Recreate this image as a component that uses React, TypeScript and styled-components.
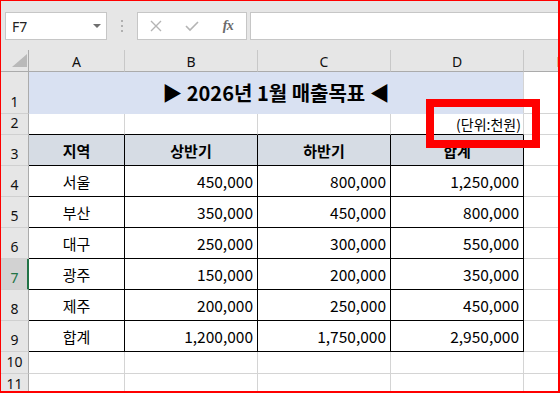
import React from 'react';
import styled, { createGlobalStyle } from 'styled-components';

const Global = createGlobalStyle`
  html, body { margin: 0; padding: 0; background: #fff; }
  body { font-family: "Noto Sans CJK KR", "Noto Sans", sans-serif; }
  * { box-sizing: border-box; }
`;

const Frame = styled.div`
  position: relative;
  width: 560px;
  height: 393px;
  border-style: solid;
  border-color: #ff0000;
  border-width: 1px 2px 2px 1px;
  overflow: hidden;
  background: #fff;
  display: flex;
  flex-direction: column;
`;

const Toolbar = styled.div`
  flex: none;
  height: 49px;
  background: #e6e6e6;
  display: flex;
  align-items: flex-start;
  padding: 11px 0 0 4px;
`;

const NameBox = styled.div`
  position: relative;
  width: 102px;
  height: 28px;
  background: #fff;
  border: 1px solid #c6c6c6;
  display: flex;
  align-items: center;
  padding-left: 6px;
  font-family: "Noto Sans", "Open Sans", sans-serif;
  font-size: 14px;
  color: #222;
`;

const DropArrow = styled.span`
  position: absolute;
  right: 5px;
  top: 11px;
  width: 0;
  height: 0;
  border-left: 4px solid transparent;
  border-right: 4px solid transparent;
  border-top: 4px solid #6f6f6f;
`;

const Dots = styled.div`
  width: 30px;
  height: 28px;
  display: flex;
  flex-direction: column;
  align-items: center;
  justify-content: center;
  gap: 3px;
`;

const Dot = styled.span`
  width: 2px;
  height: 2px;
  background: #b0b0b0;
`;

const FxButtons = styled.div`
  width: 110px;
  height: 28px;
  background: #fff;
  border: 1px solid #c6c6c6;
  display: grid;
  grid-template-columns: 36px 36px 36px;
  align-items: center;
  justify-items: center;
`;

const FxLabel = styled.span`
  font-family: "Liberation Serif", "DejaVu Serif", serif;
  font-style: italic;
  font-weight: bold;
  font-size: 14px;
  color: #6a6a6a;
  letter-spacing: -0.5px;
`;

const FormulaInput = styled.div`
  flex: 1;
  margin-left: 3px;
  height: 28px;
  background: #fff;
  border: 1px solid #c6c6c6;
  border-right: none;
`;

const Sheet = styled.div`
  display: grid;
  grid-template-columns: 28px 96px 133px 133px 133px 74px;
  grid-template-rows: 22px 42px 21px repeat(7, 31px) 22px 22px;
`;

const Corner = styled.div`
  background: #e6e6e6;
  border-right: 1px solid #ababab;
  border-bottom: 1px solid #ababab;
  position: relative;
`;

const CornerTriangle = styled.svg`
  position: absolute;
  left: 10px;
  top: 4px;
`;

const ColHeader = styled.div`
  background: #e6e6e6;
  border-right: 1px solid #c8c8c8;
  border-bottom: 1px solid #ababab;
  display: flex;
  align-items: center;
  justify-content: center;
  font-family: "Noto Sans", "Open Sans", sans-serif;
  font-size: 14px;
  color: #111;
  padding-top: 1px;
`;

const RowHeader = styled.div<{ $selected?: boolean }>`
  background: ${(p) => (p.$selected ? '#d2d2d2' : '#e6e6e6')};
  border-right: ${(p) => (p.$selected ? '2px solid #217346' : '1px solid #ababab')};
  border-bottom: 1px solid #d0d0d0;
  display: flex;
  align-items: flex-end;
  justify-content: center;
  padding-bottom: 3px;
  padding-left: ${(p) => (p.$selected ? '1px' : '0')};
  font-family: "Noto Sans", "Open Sans", sans-serif;
  font-size: 14px;
  line-height: 16px;
  color: ${(p) => (p.$selected ? '#217346' : '#111')};
`;

type Align = 'left' | 'center' | 'right';

const Cell = styled.div<{
  $align?: Align;
  $table?: boolean;
  $topEdge?: boolean;
  $fill?: string;
  $bold?: boolean;
  $size?: number;
  $span?: number;
  $padRight?: number;
}>`
  grid-column: ${(p) => (p.$span ? `span ${p.$span}` : 'auto')};
  background: ${(p) => p.$fill || '#fff'};
  border-right: 1px solid ${(p) => (p.$table ? '#000' : '#d4d4d4')};
  border-bottom: 1px solid
    ${(p) => (p.$table || p.$topEdge ? '#000' : p.$fill ? p.$fill : '#d4d4d4')};
  display: flex;
  align-items: center;
  justify-content: ${(p) =>
    p.$align === 'right' ? 'flex-end' : p.$align === 'center' ? 'center' : 'flex-start'};
  padding: 0 ${(p) => (p.$padRight ?? 4)}px 0 4px;
  font-size: ${(p) => p.$size || 15}px;
  font-weight: ${(p) => (p.$bold ? 700 : 400)};
  color: #000;
  white-space: nowrap;
`;

const Annotation = styled.div`
  position: absolute;
  left: 425px;
  top: 98px;
  width: 114px;
  height: 49px;
  border: 8px solid #ff0000;
  pointer-events: none;
`;

const data = [
  ['서울', '450,000', '800,000', '1,250,000'],
  ['부산', '350,000', '450,000', '800,000'],
  ['대구', '250,000', '300,000', '550,000'],
  ['광주', '150,000', '200,000', '350,000'],
  ['제주', '200,000', '250,000', '450,000'],
  ['합계', '1,200,000', '1,750,000', '2,950,000'],
];

const cols = ['A', 'B', 'C', 'D', 'E'];

export default function App() {
  return (
    <>
      <Global />
      <Frame>
        <Toolbar>
          <NameBox>
            F7
            <DropArrow />
          </NameBox>
          <Dots>
            <Dot />
            <Dot />
            <Dot />
          </Dots>
          <FxButtons>
            <svg width="12" height="12" viewBox="0 0 12 12">
              <path d="M1 1 L11 11 M11 1 L1 11" stroke="#b4b4b4" strokeWidth="1.4" fill="none" />
            </svg>
            <svg width="14" height="12" viewBox="0 0 14 12">
              <path d="M1 6 L5 10 L13 2" stroke="#b4b4b4" strokeWidth="1.6" fill="none" />
            </svg>
            <FxLabel>fx</FxLabel>
          </FxButtons>
          <FormulaInput />
        </Toolbar>
        <Sheet>
          <Corner>
            <CornerTriangle width="16" height="14" viewBox="0 0 16 14">
              <polygon points="16,0 16,13 1,13" fill="#b9b9b9" />
            </CornerTriangle>
          </Corner>
          {cols.map((c) => (
            <ColHeader key={c}>{c}</ColHeader>
          ))}

          <RowHeader>1</RowHeader>
          <Cell $span={4} $fill="#d9e1f2" $align="center" $bold $size={20}>
            ▶ 2026년 1월 매출목표 ◀
          </Cell>
          <Cell />

          <RowHeader>2</RowHeader>
          <Cell $topEdge />
          <Cell $topEdge />
          <Cell $topEdge />
          <Cell $topEdge $align="right" $size={14} $padRight={2}>
            (단위:천원)
          </Cell>
          <Cell />

          <RowHeader>3</RowHeader>
          {['지역', '상반기', '하반기', '합계'].map((h) => (
            <Cell key={h} $table $fill="#d6dce4" $align="center" $bold>
              {h}
            </Cell>
          ))}
          <Cell />

          {data.map((row, i) => (
            <React.Fragment key={row[0]}>
              <RowHeader $selected={i + 4 === 7}>{i + 4}</RowHeader>
              {row.map((v, j) => (
                <Cell key={j} $table $align={j === 0 ? 'center' : 'right'} $size={j === 0 ? 15 : 15.5}>
                  {v}
                </Cell>
              ))}
              <Cell />
            </React.Fragment>
          ))}

          {[10, 11].map((n) => (
            <React.Fragment key={n}>
              <RowHeader>{n}</RowHeader>
              <Cell />
              <Cell />
              <Cell />
              <Cell />
              <Cell />
            </React.Fragment>
          ))}
        </Sheet>
        <Annotation />
      </Frame>
    </>
  );
}
